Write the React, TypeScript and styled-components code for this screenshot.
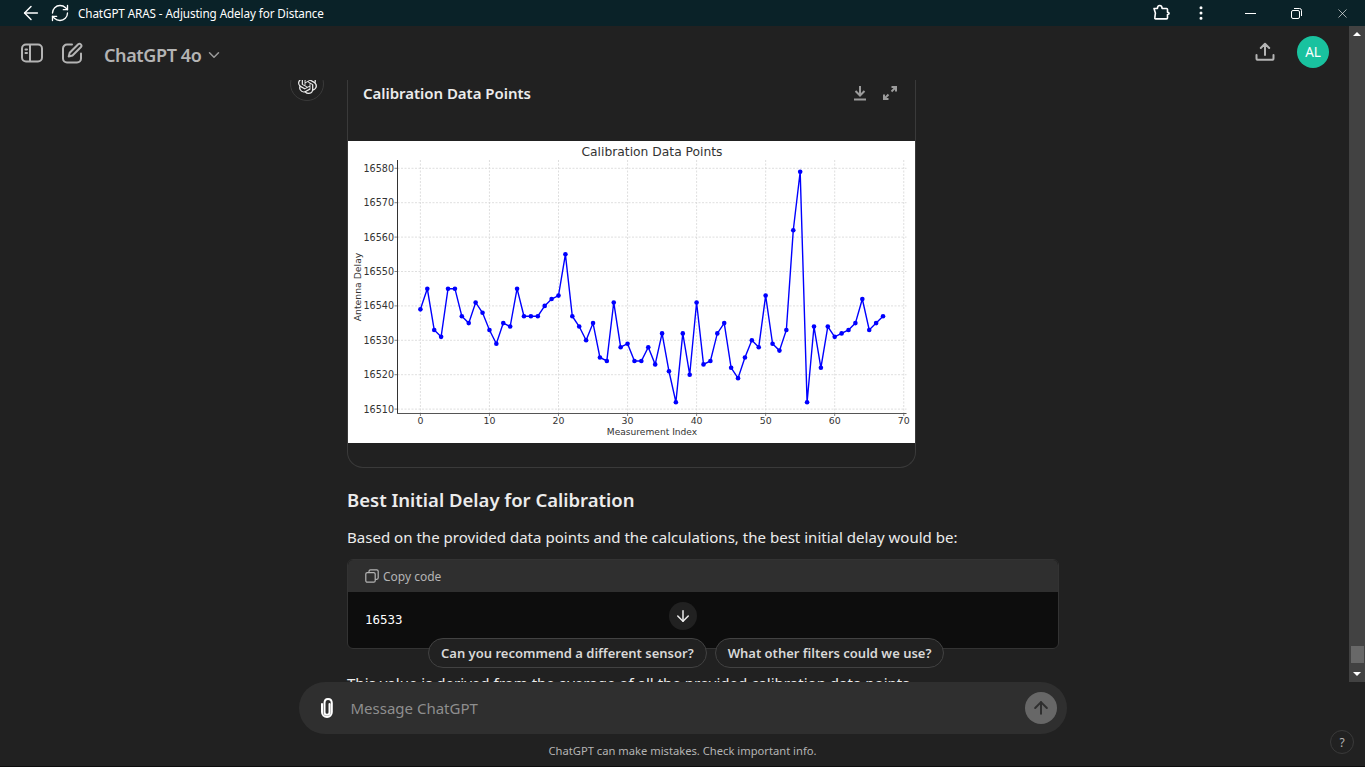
import styled, { createGlobalStyle } from "styled-components";
import { ArrowDown, ArrowLeft, ArrowUp, ChevronDown, MoreVertical, RefreshCw, X } from "lucide-react";
import { SiOpenai } from "react-icons/si";

const GlobalStyle = createGlobalStyle`
  html, body, #root {
    margin: 0;
    height: 100%;
    overflow: hidden;
  }
  body {
    background: #212121;
    font-family: "Noto Sans", "Liberation Sans", sans-serif;
    color: #ececec;
  }
`;

const Page = styled.div`
  position: relative;
  width: 1365px;
  height: 767px;
  display: flex;
  flex-direction: column;
  box-sizing: border-box;
  border-bottom: 1px solid #0c0c0c;
  overflow: hidden;
`;

const TitleBar = styled.div`
  height: 26px;
  flex: none;
  display: flex;
  align-items: center;
  background: #0a2228;
  color: #fff;
  padding-left: 20px;
`;

const ReloadWrap = styled.span`
  display: flex;
  margin-left: 8px;
`;

const TitleText = styled.span`
  font-size: 11.7px;
  margin-left: 8px;
  white-space: nowrap;
  letter-spacing: -0.1px;
`;

const TitleActions = styled.div`
  margin-left: auto;
  display: flex;
  align-items: center;
`;

const BrowserActions = styled.div`
  display: flex;
  margin-right: 6px;
`;

const WindowButton = styled.div<{ $width: number }>`
  width: ${(p) => p.$width}px;
  height: 26px;
  display: flex;
  align-items: center;
  justify-content: center;
`;

const Header = styled.div`
  height: 54px;
  flex: none;
  display: flex;
  align-items: center;
  padding: 0 36px 0 21px;
  color: #b4b4b4;
`;

const HeaderIcon = styled.svg`
  width: 22px;
  height: 22px;
  fill: none;
  stroke: #b4b4b4;
  stroke-width: 2;
  stroke-linecap: round;
  stroke-linejoin: round;
  margin-right: 18px;
`;

const ModelName = styled.div`
  display: flex;
  align-items: center;
  gap: 4px;
  margin: 4px 0 0 3px;
  font-size: 18px;
  font-weight: 600;
  letter-spacing: -0.38px;
  color: #b4b4b4;
`;

const HeaderRight = styled.div`
  margin: -2px 0 0 auto;
  display: flex;
  align-items: center;
  gap: 22px;
`;

const UserAvatar = styled.div`
  width: 32px;
  height: 32px;
  border-radius: 50%;
  background: #19c29f;
  color: #fff;
  font-size: 13.5px;
  display: flex;
  align-items: center;
  justify-content: center;
`;

const Thread = styled.div`
  flex: 1;
  min-height: 0;
  overflow: hidden;
  padding-right: 16px;
`;

const MessageRow = styled.div`
  width: 769px;
  margin: -13px auto 0;
  display: flex;
  gap: 23px;
`;

const BotAvatar = styled.div`
  width: 34px;
  height: 34px;
  flex: none;
  box-sizing: border-box;
  border: 1px solid #3a3a3a;
  border-radius: 50%;
  display: flex;
  align-items: center;
  justify-content: center;
  color: #ececec;
`;

const MessageBody = styled.div`
  flex: 1;
  min-width: 0;
`;

const ChartCard = styled.div`
  width: 569px;
  box-sizing: border-box;
  border: 1px solid #3a3a3a;
  border-top: none;
  border-radius: 0 0 16px 16px;
  padding: 0 0 24px;
`;

const ChartHeader = styled.div`
  height: 74px;
  display: flex;
  align-items: flex-start;
  justify-content: space-between;
  padding: 14px 17px 0 15px;
  box-sizing: border-box;
`;

const ChartTitle = styled.div`
  font-size: 15px;
  font-weight: 600;
  line-height: 24px;
  letter-spacing: -0.03px;
  color: #ececec;
`;

const ChartActions = styled.div`
  display: flex;
  gap: 14px;
  padding-top: 4px;
`;

const ActionIcon = styled.svg`
  width: 16px;
  height: 16px;
  fill: none;
  stroke: #9b9b9b;
  stroke-width: 2;
  stroke-linejoin: miter;
`;

const ChartImage = styled.svg`
  display: block;
  width: 567px;
  height: 302px;
  background: #fff;
`;

const Heading = styled.h3`
  margin: 19px 0 0;
  font-size: 18.5px;
  line-height: 26px;
  font-weight: 600;
  color: #ececec;
`;

const Paragraph = styled.p`
  margin: 11px 0 0;
  font-size: 15.05px;
  line-height: 26px;
  color: #ececec;
  white-space: nowrap;
`;

const CodeBlock = styled.div`
  margin-top: 9px;
  box-sizing: border-box;
  height: 90px;
  border: 1px solid #333;
  border-radius: 6px;
  overflow: hidden;
  background: #0d0d0d;
`;

const CodeHeader = styled.div`
  height: 32px;
  background: #2f2f2f;
  display: flex;
  align-items: center;
  gap: 4px;
  padding-left: 17px;
  font-size: 12px;
  color: #b4b4b4;
`;

const CodeText = styled.pre`
  margin: 0;
  padding: 19px 17px;
  font-family: "DejaVu Sans Mono", "Liberation Mono", monospace;
  font-size: 12.5px;
  line-height: 18px;
  color: #fff;
`;

const ClippedParagraph = styled(Paragraph)`
  margin-top: 21px;
`;

const ScrollDown = styled.div`
  position: absolute;
  left: 669px;
  top: 602px;
  width: 28px;
  height: 28px;
  border-radius: 50%;
  background: #212121;
  color: #ececec;
  display: flex;
  align-items: center;
  justify-content: center;
`;

const Suggestions = styled.div`
  position: absolute;
  left: 428px;
  top: 638px;
  display: flex;
  gap: 8px;
`;

const Suggestion = styled.div`
  height: 30px;
  box-sizing: border-box;
  padding: 0 12px;
  border: 1px solid #424242;
  border-radius: 15px;
  background: #212121;
  font-size: 13px;
  font-weight: 600;
  color: #d8d8d8;
  display: flex;
  align-items: center;
  white-space: nowrap;
`;

const Footer = styled.div`
  height: 84px;
  flex: none;
  background: #212121;
  display: flex;
  flex-direction: column;
  align-items: center;
`;

const Composer = styled.div`
  width: 768px;
  height: 52px;
  flex: none;
  box-sizing: border-box;
  border-radius: 26px;
  background: #2f2f2f;
  display: flex;
  align-items: center;
  padding: 0 10px 0 20px;
`;

const Placeholder = styled.span`
  margin-left: 16px;
  font-size: 15px;
  color: #8e8e8e;
`;

const SendButton = styled.div`
  margin-left: auto;
  width: 32px;
  height: 32px;
  border-radius: 50%;
  background: #676767;
  color: #2f2f2f;
  display: flex;
  align-items: center;
  justify-content: center;
`;

const Disclaimer = styled.div`
  margin-top: 9px;
  font-size: 11.2px;
  line-height: 16px;
  color: #b4b4b4;
`;

const HelpButton = styled.div`
  position: absolute;
  left: 1330px;
  top: 730px;
  width: 24px;
  height: 24px;
  box-sizing: border-box;
  border: 1px solid #3a3a3a;
  border-radius: 50%;
  font-size: 12px;
  color: #b4b4b4;
  display: flex;
  align-items: center;
  justify-content: center;
`;

const ScrollRail = styled.div`
  position: absolute;
  right: 0;
  top: 26px;
  width: 16px;
  height: 656px;
  background: #424242;
`;

const ScrollThumb = styled.div`
  position: absolute;
  left: 2px;
  top: 620px;
  width: 13px;
  height: 17px;
  background: #686868;
`;

const ScrollArrow = styled.div<{ $up?: boolean }>`
  position: absolute;
  left: 4px;
  width: 0;
  height: 0;
  border-left: 4px solid transparent;
  border-right: 4px solid transparent;
  ${(p) =>
    p.$up
      ? "top: 6px; border-bottom: 4px solid #fff;"
      : "bottom: 6px; border-top: 4px solid #fff;"}
`;

const values = [
  16539, 16545, 16533, 16531, 16545, 16545, 16537, 16535, 16541, 16538, 16533, 16529, 16535, 16534,
  16545, 16537, 16537, 16537, 16540, 16542, 16543, 16555, 16537, 16534, 16530, 16535, 16525, 16524,
  16541, 16528, 16529, 16524, 16524, 16528, 16523, 16532, 16521, 16512, 16532, 16520, 16541, 16523,
  16524, 16532, 16535, 16522, 16519, 16525, 16530, 16528, 16543, 16529, 16527, 16533, 16562, 16579,
  16512, 16534, 16522, 16534, 16531, 16532, 16533, 16535, 16542, 16533, 16535, 16537,
];

const px = (i: number) => 72.4 + i * 6.905;
const py = (v: number) => 27.3 + (16580 - v) * 3.44;
const xTicks = [0, 10, 20, 30, 40, 50, 60, 70];
const yTicks = [16510, 16520, 16530, 16540, 16550, 16560, 16570, 16580];
const chartFont = "'DejaVu Sans', sans-serif";
const chartInk = "#333";

function Chart() {
  return (
    <ChartImage viewBox="0 0 567 302">
      {xTicks.map((t) => (
        <g key={t}>
          <line x1={px(t)} x2={px(t)} y1={19} y2={272} stroke="#d6d6d6" strokeWidth={0.8} strokeDasharray="2 1.5" />
          <line x1={px(t)} x2={px(t)} y1={272} y2={275} stroke="#555" strokeWidth={0.7} />
          <text x={px(t)} y={283} textAnchor="middle" fontSize={9.4} fontFamily={chartFont} fill={chartInk}>
            {t}
          </text>
        </g>
      ))}
      {yTicks.map((t) => (
        <g key={t}>
          <line x1={49.5} x2={558.5} y1={py(t)} y2={py(t)} stroke="#d6d6d6" strokeWidth={0.8} strokeDasharray="2 1.5" />
          <line x1={46.5} x2={49.5} y1={py(t)} y2={py(t)} stroke="#555" strokeWidth={0.7} />
          <text x={46} y={py(t) + 3.4} textAnchor="end" fontSize={9.6} fontFamily={chartFont} fill={chartInk}>
            {t}
          </text>
        </g>
      ))}
      <line x1={49.5} x2={49.5} y1={19} y2={272.5} stroke="#333" strokeWidth={1} />
      <line x1={49} x2={558.5} y1={272.5} y2={272.5} stroke="#555" strokeWidth={1} />
      <polyline
        points={values.map((v, i) => `${px(i)},${py(v)}`).join(" ")}
        fill="none"
        stroke="#0000ff"
        strokeWidth={1.4}
      />
      {values.map((v, i) => (
        <circle key={i} cx={px(i)} cy={py(v)} r={2.3} fill="#0000ff" />
      ))}
      <text x={304} y={15} textAnchor="middle" fontSize={12.3} fontFamily={chartFont} fill={chartInk}>
        Calibration Data Points
      </text>
      <text x={304} y={294} textAnchor="middle" fontSize={9.1} fontFamily={chartFont} fill={chartInk}>
        Measurement Index
      </text>
      <text
        transform="translate(12.5 146) rotate(-90)"
        textAnchor="middle"
        fontSize={9.3}
        fontFamily={chartFont}
        fill={chartInk}
      >
        Antenna Delay
      </text>
    </ChartImage>
  );
}

function ExtensionIcon() {
  return (
    <svg width="18" height="18" viewBox="0 0 18 18" fill="none" stroke="#fff" strokeWidth="1.6" strokeLinejoin="round">
      <path d="M2 4.5h3.4c0-1.2.2-3 2.3-3s2.4 1.8 2.4 3h4.4c.6 0 1 .4 1 1v2.8c1 .1 1.6.4 1.6 1.1s-.6 1-1.6 1.1v3.4c0 .6-.4 1-1 1H3.6c-.6 0-.9-.4-.8-1l.6-4.8L2 4.5z" />
    </svg>
  );
}

function RestoreIcon() {
  return (
    <svg width="11" height="11" viewBox="0 0 11 11" fill="none" stroke="#fff" strokeWidth="1">
      <rect x="0.5" y="2.5" width="8" height="8" rx="1.5" />
      <path d="M3 .5h5.5a2 2 0 0 1 2 2V8" />
    </svg>
  );
}

function ShareIcon() {
  return (
    <svg width="20" height="20" viewBox="0 0 20 20" fill="none" stroke="#b4b4b4" strokeWidth="2" strokeLinecap="round" strokeLinejoin="round">
      <path d="M10 13V2M5.8 6 10 1.8 14.2 6M1.5 13v3.2c0 1 .6 1.6 1.6 1.6h13.8c1 0 1.6-.6 1.6-1.6V13" />
    </svg>
  );
}

function PaperclipIcon() {
  return (
    <svg width="16" height="22" viewBox="0 0 16 22" fill="none" stroke="#fff" strokeWidth="2" strokeLinecap="round">
      <path d="M10.5 7v8.2c0 1.5-1 2.6-2.5 2.6s-2.5-1.1-2.5-2.6V6.200C5.500 3.500 7 2 9 2s3.800 1.500 3.800 4.200V15c0 3-2 5-4.800 5s-5-2-5-5V7" />
    </svg>
  );
}

function CopyIcon() {
  return (
    <svg width="14" height="14" viewBox="0 0 14 14" fill="none" stroke="#b4b4b4" strokeWidth="1.2" strokeLinejoin="round">
      <rect x="0.8" y="3.6" width="9.4" height="9.6" rx="1.5" />
      <path d="M4 3.6V2.300C4 1.400 4.600.8 5.500.8h6.200c.9 0 1.500.6 1.500 1.500v6.500c0 .9-.6 1.500-1.500 1.500h-1.500" />
    </svg>
  );
}

export default function App() {
  return (
    <Page>
      <GlobalStyle />
      <TitleBar>
        <ArrowLeft size={22} color="#fff" strokeWidth={1.6} />
        <ReloadWrap>
          <RefreshCw size={20} color="#fff" strokeWidth={1.6} />
        </ReloadWrap>
        <TitleText>ChatGPT ARAS - Adjusting Adelay for Distance</TitleText>
        <TitleActions>
          <BrowserActions>
            <WindowButton $width={40}>
              <ExtensionIcon />
            </WindowButton>
            <WindowButton $width={40}>
              <MoreVertical size={18} color="#fff" strokeWidth={2} />
            </WindowButton>
          </BrowserActions>
          <WindowButton $width={46}>
            <svg width="11" height="1" viewBox="0 0 11 1">
              <rect width="11" height="1" fill="#fff" />
            </svg>
          </WindowButton>
          <WindowButton $width={46}>
            <RestoreIcon />
          </WindowButton>
          <WindowButton $width={46}>
            <X size={15} color="#fff" strokeWidth={1} />
          </WindowButton>
        </TitleActions>
      </TitleBar>

      <Header>
        <HeaderIcon viewBox="0 0 22 22">
          <rect x="1" y="2.5" width="20" height="17" rx="4" />
          <path d="M9 3v16" />
          <path d="M4.5 7.5h1.5M4.5 11h1.5" />
        </HeaderIcon>
        <HeaderIcon viewBox="0 0 22 22">
          <path d="M11 2.5H6a4 4 0 0 0-4 4v10a4 4 0 0 0 4 4h10a4 4 0 0 0 4-4v-5" />
          <path d="M17.2 2.2a2 2 0 0 1 2.8 2.8l-8.5 8.500-3.800 1 1-3.800 8.500-8.500z" />
        </HeaderIcon>
        <ModelName>
          ChatGPT 4o
          <ChevronDown size={18} color="#9b9b9b" />
        </ModelName>
        <HeaderRight>
          <ShareIcon />
          <UserAvatar>AL</UserAvatar>
        </HeaderRight>
      </Header>

      <Thread>
        <MessageRow>
          <BotAvatar>
            <SiOpenai size={19} />
          </BotAvatar>
          <MessageBody>
            <ChartCard>
              <ChartHeader>
                <ChartTitle>Calibration Data Points</ChartTitle>
                <ChartActions>
                  <ActionIcon viewBox="0 0 16 16">
                    <path d="M8 1v9M3.500 6 8 10.500 12.500 6M2 14.500h12" />
                  </ActionIcon>
                  <ActionIcon viewBox="0 0 16 16">
                    <path d="M9.500 2h4.500v4.500M14 2 9.500 6.500M6.500 14H2V9.500M2 14l4.500-4.500" />
                  </ActionIcon>
                </ChartActions>
              </ChartHeader>
              <Chart />
            </ChartCard>
            <Heading>Best Initial Delay for Calibration</Heading>
            <Paragraph>Based on the provided data points and the calculations, the best initial delay would be:</Paragraph>
            <CodeBlock>
              <CodeHeader>
                <CopyIcon />
                Copy code
              </CodeHeader>
              <CodeText>16533</CodeText>
            </CodeBlock>
            <ClippedParagraph>
              This value is derived from the average of all the provided calibration data points.
            </ClippedParagraph>
          </MessageBody>
        </MessageRow>
      </Thread>

      <Footer>
        <Composer>
          <PaperclipIcon />
          <Placeholder>Message ChatGPT</Placeholder>
          <SendButton>
            <ArrowUp size={20} strokeWidth={2.4} />
          </SendButton>
        </Composer>
        <Disclaimer>ChatGPT can make mistakes. Check important info.</Disclaimer>
      </Footer>

      <ScrollDown>
        <ArrowDown size={18} />
      </ScrollDown>
      <Suggestions>
        <Suggestion>Can you recommend a different sensor?</Suggestion>
        <Suggestion>What other filters could we use?</Suggestion>
      </Suggestions>
      <HelpButton>?</HelpButton>
      <ScrollRail>
        <ScrollArrow $up />
        <ScrollThumb />
        <ScrollArrow />
      </ScrollRail>
    </Page>
  );
}
